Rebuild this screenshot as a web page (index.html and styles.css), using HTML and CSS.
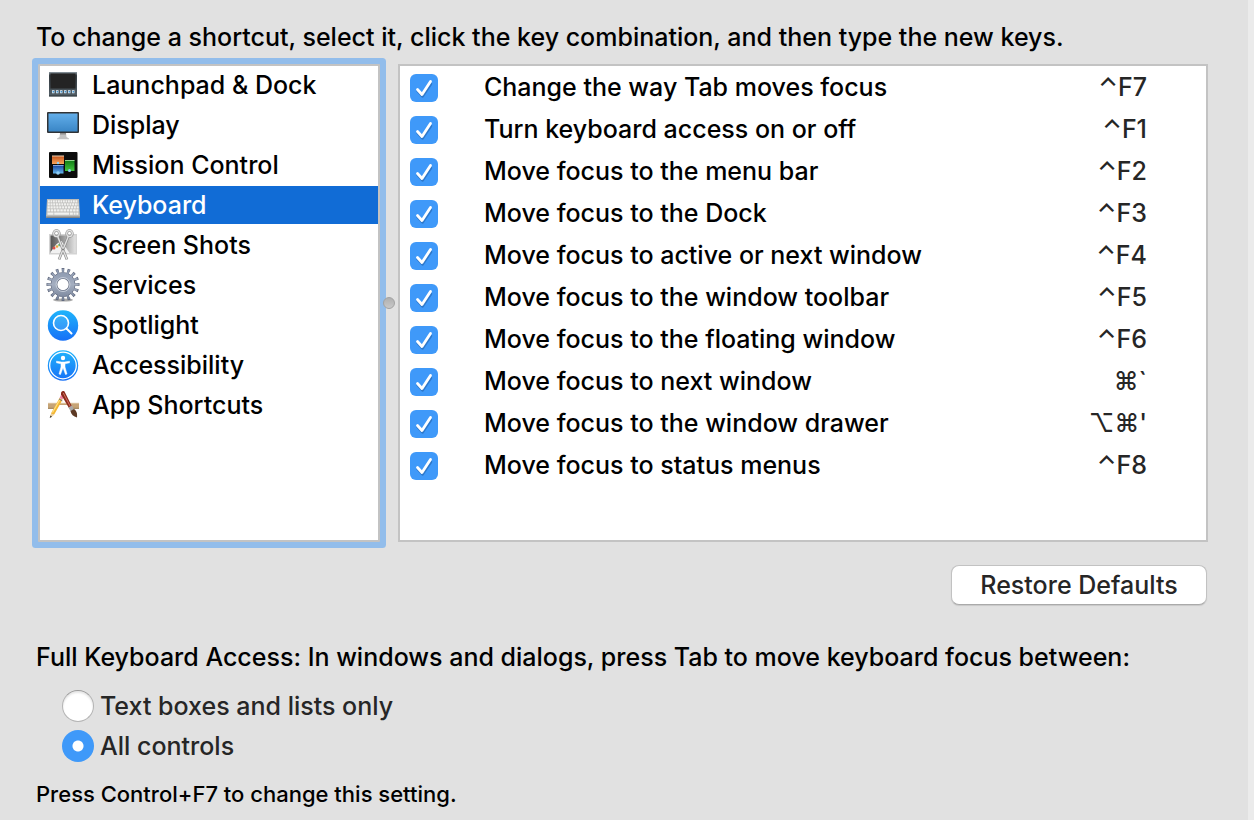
FILE: index.html
```html
<!DOCTYPE html>
<html lang="en">
<head>
<meta charset="utf-8">
<title>Keyboard Shortcuts</title>
<link rel="stylesheet" href="styles.css">
</head>
<body>
<main class="prefs">
  <p class="intro">To change a shortcut, select it, click the key combination, and then type the new keys.</p>

  <div class="panes">
    <nav class="categories" aria-label="Shortcut categories">
      <button class="category" type="button">
        <svg class="icon" viewBox="0 0 36 36" aria-hidden="true">
          <defs><linearGradient id="lp" x2="0" y2="1"><stop offset="0" stop-color="#8b979f"/><stop offset=".15" stop-color="#343b40"/><stop offset=".8" stop-color="#4a555c"/><stop offset="1" stop-color="#74818a"/></linearGradient></defs>
          <rect x="4" y="5" width="28" height="24.500" fill="url(#lp)"/><rect x="5.500" y="6.500" width="25" height="15" fill="#242424"/><path d="M5 23h26l1 5H4z" fill="#4e5a62"/>
          <path d="M7 24.800h23" stroke="#e4edf3" stroke-width="3" stroke-dasharray="2.500 1.500"/><path d="M7.600 24.800h22" stroke="#3e92cf" stroke-width="1.500" stroke-dasharray="1.500 2.500"/>
          <path d="M4 28.900h28" stroke="#20262a" stroke-width="1"/>
        </svg>
        <span>Launchpad &amp; Dock</span>
      </button>
      <button class="category" type="button">
        <svg class="icon" viewBox="0 0 36 36" aria-hidden="true">
          <defs><linearGradient id="ds" x2="0" y2="1"><stop offset="0" stop-color="#62aeea"/><stop offset="1" stop-color="#3a86c6"/></linearGradient></defs>
          <path d="M15 26h6l.5 4 2.500 1.500v.8H12v-.8l2.500-1.500z" fill="#c3c3c3"/><path d="M15 26h6v1.500h-6z" fill="#8f8f8f"/>
          <rect x="2" y="5" width="32" height="21" rx="1" fill="#303336"/><rect x="3.500" y="6.500" width="29" height="18" fill="url(#ds)"/>
        </svg>
        <span>Display</span>
      </button>
      <button class="category" type="button">
        <svg class="icon" viewBox="0 0 36 36" aria-hidden="true">
          <defs>
            <linearGradient id="mo" x2="0" y2="1"><stop offset="0" stop-color="#c4541c"/><stop offset="1" stop-color="#f8a65c"/></linearGradient>
            <linearGradient id="mb" x2="0" y2="1"><stop offset="0" stop-color="#123f9c"/><stop offset="1" stop-color="#66b8ee"/></linearGradient>
            <linearGradient id="mg" x2="0" y2="1"><stop offset="0" stop-color="#0f7a14"/><stop offset="1" stop-color="#43c53e"/></linearGradient>
          </defs>
          <rect x="4" y="5" width="28.500" height="26" rx="1" fill="#0c0c0c"/>
          <rect x="7" y="9" width="12" height="8" fill="url(#mo)"/><path d="M7 9h12" stroke="#eed0b0"/>
          <rect x="8" y="18" width="10.500" height="8.500" fill="url(#mb)"/><path d="M8 18.500h10.500" stroke="#7ca4e4"/>
          <rect x="20" y="13" width="9.500" height="11" fill="url(#mg)"/><path d="M20 13.500h9.500" stroke="#95d78f"/>
          <g fill="#8fcdf4"><circle cx="13" cy="16" r="1.200"/><circle cx="13" cy="26" r="1.800"/><circle cx="24.500" cy="23.500" r="1.500"/></g>
        </svg>
        <span>Mission Control</span>
      </button>
      <button class="category is-selected" type="button" aria-current="true">
        <svg class="icon" viewBox="0 0 36 36" aria-hidden="true">
          <path d="M2 12h32l1 17.500a1.500 1.500 0 0 1-1.500 1.500h-31A1.500 1.500 0 0 1 1 29.500z" fill="#bcbcba"/><path d="M1 29.500h34v.5a1 1 0 0 1-1 1H2a1 1 0 0 1-1-1z" fill="#858585"/>
          <g stroke="#f2f2f0" stroke-width="2.200"><path d="M3 14.300h30" stroke-dasharray="1.800 .7"/><path d="M2.800 17.300h30.500" stroke-dasharray="2 .7"/><path d="M2.600 20.300h31" stroke-dasharray="2.200 .7"/><path d="M2.500 23.300h31" stroke-dasharray="2.500 .7"/><path d="M2.500 26.700h6m.7 0h15m.7 0h3m.7 0h2m.7 0h2"/></g>
        </svg>
        <span>Keyboard</span>
      </button>
      <button class="category" type="button">
        <svg class="icon" viewBox="0 0 36 36" aria-hidden="true">
          <defs><linearGradient id="ss"><stop offset="0" stop-color="#555"/><stop offset=".5" stop-color="#999"/><stop offset="1" stop-color="#e2e2e2"/></linearGradient></defs>
          <rect x="4" y="7" width="28" height="20.500" fill="#d3d3d3"/><rect x="5.500" y="8.500" width="25" height="17.500" fill="url(#ss)"/>
          <path d="M5.500 25c3-3 5-9 11-11l8 12h-19z" fill="#f1f1f1"/><circle cx="9" cy="21" r="1.500" fill="#df5148"/><circle cx="12" cy="19.500" r="1.300" fill="#eaa83f"/><circle cx="14.500" cy="18" r="1.300" fill="#64b969"/>
          <g fill="none" stroke="#858585" stroke-width="2.600"><path d="M12.500 9l9.500 23.500M23.500 9L14 32.500"/><ellipse cx="11.500" cy="6.500" rx="2.800" ry="3"/><ellipse cx="24.500" cy="6.500" rx="2.800" ry="3"/></g>
          <g fill="none" stroke="#e2e2e2" stroke-width="1.400"><path d="M12.500 9l9.500 23.500M23.500 9L14 32.500"/><ellipse cx="11.500" cy="6.500" rx="2.800" ry="3"/><ellipse cx="24.500" cy="6.500" rx="2.800" ry="3"/></g><circle cx="18" cy="22.500" r="1" fill="#777"/>
        </svg>
        <span>Screen Shots</span>
      </button>
      <button class="category" type="button">
        <svg class="icon" viewBox="0 0 36 36" aria-hidden="true">
          <defs><linearGradient id="gr" gradientUnits="userSpaceOnUse" x1="0" y1="1" x2="0" y2="34"><stop offset="0" stop-color="#8794ac"/><stop offset=".5" stop-color="#a4aec0"/><stop offset="1" stop-color="#727e96"/></linearGradient></defs>
          <ellipse cx="18" cy="33" rx="10" ry="1.600" fill="#a8a8a8"/>
          <g fill="none"><circle cx="18" cy="17.500" r="14" stroke="#5c6479" stroke-width="5" pathLength="160" stroke-dasharray="4.600 5.400" stroke-dashoffset="2.300"/><circle cx="18" cy="17.500" r="9" stroke="#5c6479" stroke-width="6.600"/><circle cx="18" cy="17.500" r="13.300" stroke="url(#gr)" stroke-width="5" pathLength="160" stroke-dasharray="3.400 6.600" stroke-dashoffset="1.700"/><circle cx="18" cy="17.500" r="9" stroke="url(#gr)" stroke-width="5.400"/><circle cx="18" cy="17.500" r="7" stroke="#c4cbd7" stroke-width="1"/></g>
        </svg>
        <span>Services</span>
      </button>
      <button class="category" type="button">
        <svg class="icon" viewBox="0 0 36 36" aria-hidden="true">
          <defs><linearGradient id="sp" x2="0" y2="1"><stop offset="0" stop-color="#1fb4fb"/><stop offset="1" stop-color="#1670f7"/></linearGradient></defs>
          <circle cx="18" cy="18.500" r="15.200" fill="url(#sp)"/><circle cx="16" cy="16" r="7.500" fill="#fff" fill-opacity=".12" stroke="#fff" stroke-width="1.600"/><path d="M21.500 21.500l5 5" stroke="#fff" stroke-width="2" stroke-linecap="round"/>
        </svg>
        <span>Spotlight</span>
      </button>
      <button class="category" type="button">
        <svg class="icon" viewBox="0 0 36 36" aria-hidden="true">
          <circle cx="18" cy="18.500" r="15.200" fill="url(#sp)"/><circle cx="18" cy="18.500" r="13.300" fill="none" stroke="#fff" stroke-width="1.300"/>
          <circle cx="18" cy="11" r="2.200" fill="#fff"/><path d="M11.500 14.200l5 .8h3l5-.8v1.600l-4.500 1v3.200l2 7-1.500.5-2.200-6h-.6l-2.200 6-1.500-.5 2-7v-3.200l-4.500-1z" fill="#fff" stroke="#fff" stroke-width=".5"/>
        </svg>
        <span>Accessibility</span>
      </button>
      <button class="category" type="button">
        <svg class="icon" viewBox="0 0 36 36" aria-hidden="true">
          <rect x="3" y="16" width="31" height="5.500" fill="#c6a477"/><path d="M3 16.300h31" stroke="#dcc39e"/><path d="M3 21.300h31" stroke="#9c7c52"/>
          <path d="M11.500 22h13l-2-4h-9z" fill="#fff"/>
          <path d="M6.500 25.500L14.500 11l3 1.700L9.500 27l-3.500 3-1 .2z" fill="#f3b631"/><path d="M7.500 25.500l8-14" stroke="#ffe183" stroke-width="1.200"/><path d="M6 26.500l3.500 1-4 3.300z" fill="#ebcfa0"/><path d="M5.500 28.500l-.8 2.500 2.300-1.300z" fill="#333"/><path d="M14.500 11l1.500-3 3 1.600-1.500 3z" fill="#ee83a3"/><path d="M14 12l3.300 1.800" stroke="#777" stroke-width="1"/>
          <path d="M16 7.500c-.5-2.500 1.500-4.300 3.500-3l7.500 15-3 1.600z" fill="#8b2b1d"/><path d="M18.300 6l7 13.500" stroke="#d37161" stroke-width="1"/><path d="M23.500 20.500l3.500-2 2 4-3.300 2z" fill="#a9a9a9"/><path d="M25.500 24l3.500-2c3 2 3.300 5 3 8.500-3.500-1-6-3-6.500-6.500z" fill="#5d3a24"/>
        </svg>
        <span>App Shortcuts</span>
      </button>
    </nav>

    <div class="splitter" role="separator" aria-orientation="vertical"><span class="knob"></span></div>

    <div class="shortcuts">
      <table class="shortcut-table">
        <tbody>
          <tr><td class="toggle"><input class="check" type="checkbox" id="s1" checked></td><td><label for="s1">Change the way Tab moves focus</label></td><td class="keys">⌃F7</td></tr>
          <tr><td class="toggle"><input class="check" type="checkbox" id="s2" checked></td><td><label for="s2">Turn keyboard access on or off</label></td><td class="keys">⌃F1</td></tr>
          <tr><td class="toggle"><input class="check" type="checkbox" id="s3" checked></td><td><label for="s3">Move focus to the menu bar</label></td><td class="keys">⌃F2</td></tr>
          <tr><td class="toggle"><input class="check" type="checkbox" id="s4" checked></td><td><label for="s4">Move focus to the Dock</label></td><td class="keys">⌃F3</td></tr>
          <tr><td class="toggle"><input class="check" type="checkbox" id="s5" checked></td><td><label for="s5">Move focus to active or next window</label></td><td class="keys">⌃F4</td></tr>
          <tr><td class="toggle"><input class="check" type="checkbox" id="s6" checked></td><td><label for="s6">Move focus to the window toolbar</label></td><td class="keys">⌃F5</td></tr>
          <tr><td class="toggle"><input class="check" type="checkbox" id="s7" checked></td><td><label for="s7">Move focus to the floating window</label></td><td class="keys">⌃F6</td></tr>
          <tr><td class="toggle"><input class="check" type="checkbox" id="s8" checked></td><td><label for="s8">Move focus to next window</label></td><td class="keys">⌘`</td></tr>
          <tr><td class="toggle"><input class="check" type="checkbox" id="s9" checked></td><td><label for="s9">Move focus to the window drawer</label></td><td class="keys">⌥⌘'</td></tr>
          <tr><td class="toggle"><input class="check" type="checkbox" id="s10" checked></td><td><label for="s10">Move focus to status menus</label></td><td class="keys">⌃F8</td></tr>
        </tbody>
      </table>
    </div>
  </div>

  <div class="actions"><button class="restore" type="button">Restore Defaults</button></div>

  <fieldset class="access">
    <legend>Full Keyboard Access: In windows and dialogs, press Tab to move keyboard focus between:</legend>
    <label class="option"><input class="radio" type="radio" name="access"><span>Text boxes and lists only</span></label>
    <label class="option"><input class="radio" type="radio" name="access" checked><span>All controls</span></label>
  </fieldset>
  <p class="note">Press Control+F7 to change this setting.</p>
</main>
</body>
</html>
```

FILE: styles.css
```css
* {
  box-sizing: border-box;
}

body {
  margin: 0;
  min-height: 100vh;
  background: #e1e1e1;
  border-right: 6px solid #ebebeb;
  color: #000;
  font: 450 25px/32px Inter, "Liberation Sans", sans-serif;
}

.prefs {
  padding: 21px 40px 8px 36px;
}

.intro,
.note {
  margin: 0;
  white-space: nowrap;
}

.panes {
  display: flex;
  min-height: 478px;
  margin: 11px 0 0 2px;
}

.categories {
  flex: 0 0 342px;
  display: flex;
  flex-direction: column;
  gap: 2px;
  background: #fff;
  border: 2px solid #c3c3c3;
  box-shadow: 0 0 0 6px #92bdeb;
  border-radius: 1px;
}

.category {
  display: flex;
  align-items: center;
  gap: 11px;
  height: 38px;
  padding: 0 5px;
  border: 0;
  background: none;
  color: inherit;
  font: inherit;
  text-align: left;
  white-space: nowrap;
}

.category.is-selected {
  background: #116cd6;
  color: #fff;
}

.icon {
  width: 36px;
  height: 36px;
  flex: none;
}

.splitter {
  flex: 0 0 18px;
  display: flex;
  align-items: center;
  justify-content: center;
  z-index: 1;
}

.knob {
  width: 12px;
  height: 12px;
  border: 1px solid #a2a2a2;
  border-radius: 50%;
  background: linear-gradient(#b0b0b0, #c8c8c8);
}

.shortcuts {
  flex: 1;
  background: #fff;
  border: 2px solid #c3c3c3;
}

.shortcut-table {
  width: 100%;
  border-collapse: collapse;
}

.shortcut-table td {
  height: 42px;
  padding: 0;
  vertical-align: middle;
}

.shortcut-table .toggle {
  width: 84px;
  padding: 2px 0 0 10px;
}

.shortcut-table .keys {
  padding-right: 59px;
  color: #262626;
  text-align: right;
}

.check,
.radio {
  display: block;
  appearance: none;
  flex: none;
  margin: 0;
}

.check {
  width: 28px;
  height: 28px;
  border-radius: 6px;
  background: #3f99f9;
}

.check:checked {
  background-image: url("data:image/svg+xml,%3Csvg xmlns='http://www.w3.org/2000/svg' viewBox='0 0 28 28'%3E%3Cpath d='M7.500 16l5 5.500L21 9' transform='translate(0 1)' fill='none' stroke='%232d78cb' stroke-width='2.500' stroke-linecap='round' stroke-linejoin='round'/%3E%3Cpath d='M7.500 15.500l4.500 5L20.500 7.500' fill='none' stroke='white' stroke-width='2.800' stroke-linecap='round' stroke-linejoin='round'/%3E%3C/svg%3E");
}

.actions {
  display: flex;
  justify-content: flex-end;
  margin-top: 23px;
  padding-right: 1px;
}

.restore {
  width: 256px;
  height: 40px;
  padding: 0;
  border: 1px solid #c2c2c2;
  border-bottom-color: #aaa;
  border-radius: 8px;
  background: #fff;
  box-shadow: 0 1px 1px #c8c8c8;
  color: #262626;
  font: inherit;
}

.access {
  min-width: 0;
  margin: 36px 0 0;
  padding: 0;
  border: 0;
}

.access legend {
  padding: 0;
  margin-bottom: 13px;
  white-space: nowrap;
}

.option {
  display: flex;
  align-items: center;
  gap: 6px;
  height: 40px;
  padding-left: 26px;
  color: #262626;
}

.radio {
  width: 32px;
  height: 32px;
  border: 1px solid #b4b4b4;
  border-top-color: #999;
  border-radius: 50%;
  background: #fff;
  box-shadow: inset 0 2px 2px #e6e6e6;
}

.radio:checked {
  border: 0;
  background: radial-gradient(circle, #fff 5px, #3f99f9 6px);
  box-shadow: none;
}

.note {
  margin-top: 12px;
  font-size: 22px;
}
```
